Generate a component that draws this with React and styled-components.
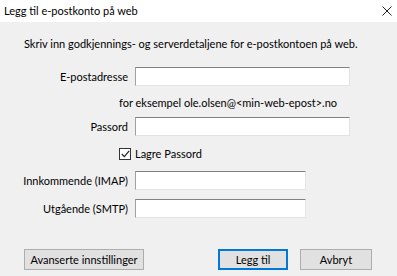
import React from "react";
import styled, { createGlobalStyle } from "styled-components";

const GlobalStyle = createGlobalStyle`
  html, body {
    margin: 0;
    padding: 0;
    background: #f0f0f0;
  }
  body {
    font-family: Lato, "Noto Sans", "Liberation Sans", sans-serif;
    font-size: 11px;
    color: #000;
  }
`;

export default function App() {
  return (
    <>
      <GlobalStyle />
      <Dialog>
        <TitleBar>
          <Title>Legg til e-postkonto på web</Title>
          <CloseIcon width="10" height="10" viewBox="0 0 10 10">
            <path d="M0.5 0.5 L9.5 9.5 M9.5 0.5 L0.5 9.5" stroke="#222" strokeWidth="1" />
          </CloseIcon>
        </TitleBar>
        <Body>
          <Intro>Skriv inn godkjennings- og serverdetaljene for e-postkontoen på web.</Intro>

          <FieldRow $top={15}>
            <Label>E-postadresse</Label>
            <TextBox $width={215} autoFocus />
          </FieldRow>

          <Hint $top={9}>for eksempel ole.olsen@&lt;min-web-epost&gt;.no</Hint>

          <FieldRow $top={6}>
            <Label>Passord</Label>
            <TextBox $width={215} type="password" />
          </FieldRow>

          <CheckRow $top={10}>
            <Check>
              <svg width="9" height="8" viewBox="0 0 9 8">
                <path d="M0.8 4 L3.3 6.6 L8.2 0.8" fill="none" stroke="#222" strokeWidth="1.2" />
              </svg>
            </Check>
            <span>Lagre Passord</span>
          </CheckRow>

          <FieldRow $top={9}>
            <Label>Innkommende (IMAP)</Label>
            <TextBox $width={171} />
          </FieldRow>

          <FieldRow $top={9}>
            <Label>Utgående (SMTP)</Label>
            <TextBox $width={171} />
          </FieldRow>

          <ButtonBar>
            <Button $width={120}>Avanserte innstillinger</Button>
            <Actions>
              <Button $width={70} $primary>Legg til</Button>
              <Button $width={72}>Avbryt</Button>
            </Actions>
          </ButtonBar>
        </Body>
      </Dialog>
    </>
  );
}

const Dialog = styled.div`
  width: 397px;
  height: 276px;
  display: flex;
  flex-direction: column;
  overflow: hidden;
  white-space: nowrap;
`;

const TitleBar = styled.div`
  flex: none;
  height: 22px;
  background: #fff;
  display: flex;
  align-items: center;
  justify-content: space-between;
  padding: 0 5px 0 4px;
`;

const Title = styled.span`
  line-height: 16px;
`;

const CloseIcon = styled.svg`
  display: block;
`;

const Body = styled.div`
  flex: 1;
  background: #f0f0f0;
  padding: 14px 25px 0 24px;
  display: flex;
  flex-direction: column;
`;

const Intro = styled.div`
  line-height: 16px;
`;

const FieldRow = styled.div`
  display: grid;
  grid-template-columns: 104px auto;
  column-gap: 7px;
  align-items: center;
  margin-top: ${(p) => p.$top}px;
`;

const Label = styled.label`
  justify-self: end;
  text-align: right;
  line-height: 16px;
`;

const TextBox = styled.input`
  box-sizing: border-box;
  width: ${(p) => p.$width}px;
  height: 19px;
  margin: 0;
  padding: 0 3px;
  background: #fff;
  border: 1px solid #e3e3e3;
  border-top-color: #828282;
  border-left-color: #a0a0a0;
  outline: none;
  font: inherit;
  caret-color: #000;
`;

const Hint = styled.div`
  margin-top: ${(p) => p.$top}px;
  padding-left: 95px;
  line-height: 16px;
`;

const CheckRow = styled.div`
  display: flex;
  align-items: center;
  gap: 4px;
  margin-top: ${(p) => p.$top}px;
  padding-left: 95px;
  line-height: 16px;
`;

const Check = styled.span`
  box-sizing: border-box;
  width: 12px;
  height: 12px;
  border: 1px solid #333;
  background: #fff;
  display: flex;
  align-items: center;
  justify-content: center;
`;

const ButtonBar = styled.div`
  display: flex;
  align-items: center;
  margin-top: 31px;
`;

const Actions = styled.div`
  margin-left: auto;
  display: flex;
  gap: 12px;
`;

const Button = styled.button`
  box-sizing: border-box;
  width: ${(p) => p.$width}px;
  height: 21px;
  margin: 0;
  padding: 0;
  font: inherit;
  color: #000;
  background: #e1e1e1;
  border: ${(p) => (p.$primary ? "2px solid #0078d7" : "1px solid #adadad")};
`;
